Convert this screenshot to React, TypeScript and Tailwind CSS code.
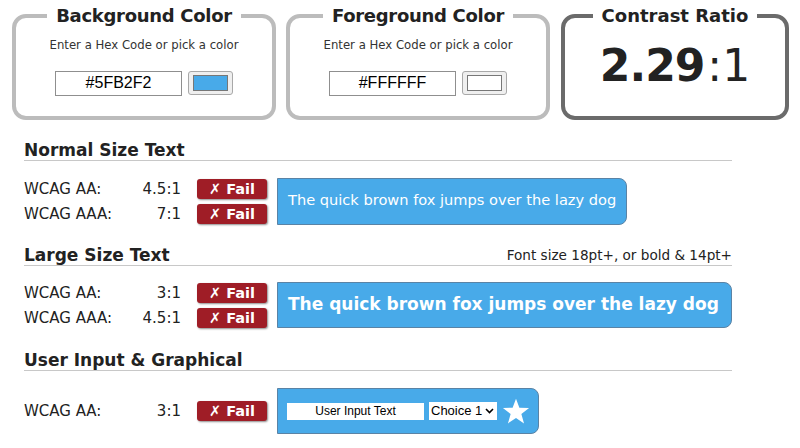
import React from "react";

const BG = "#48aae9";

function ColorBox({ title, hex, swatch }: { title: string; hex: string; swatch: string }) {
  return (
    <fieldset className="rounded-[14px] border-4 border-[#bcbcbc] h-[115px] px-2 text-center">
      <legend className="mx-auto px-[9px] text-[18px] tracking-[-0.3px] font-bold leading-[22px] text-[#222]">{title}</legend>
      <p className="mt-[10px] text-[11.7px] text-[#333]">Enter a Hex Code or pick a color</p>
      <div className="mt-[16px] flex items-center justify-center gap-[6px]">
        <input
          readOnly
          value={hex}
          className="w-[127px] h-[25px] border border-[#8f8f8f] text-center text-[16px] text-black font-['Liberation_Sans',Arial,sans-serif] outline-none"
        />
        <div className="w-[45px] h-[24px] rounded-[3px] border border-[#a8a8a8] bg-[#efefef] flex items-center justify-center">
          <div className="w-[35px] h-[16px] border border-[#777]" style={{ backgroundColor: swatch }} />
        </div>
      </div>
    </fieldset>
  );
}

function FailBadge() {
  return (
    <div className="w-[70px] h-[20px] rounded-[3px] bg-[#9f1d26] text-white font-bold text-[14.5px] leading-[20px] text-center shadow-[1px_1px_2px_rgba(0,0,0,0.45)]">
      ✗ Fail
    </div>
  );
}

function Row({ label, ratio }: { label: string; ratio: string }) {
  return (
    <div className="flex items-center h-[20px]">
      <span className="w-[110px] text-[15px] text-[#222]">{label}</span>
      <span className="w-[47px] text-right text-[15px] text-[#222]">{ratio}</span>
      <div className="ml-[16px]">
        <FailBadge />
      </div>
    </div>
  );
}

function Heading({ children, note }: { children: React.ReactNode; note?: string }) {
  return (
    <div className="flex items-end justify-between border-b border-[#c8c8c8]">
      <h2 className="text-[17px] font-bold text-[#222] leading-[19px]">{children}</h2>
      {note && <span className="text-[13.6px] text-[#222] leading-[19px]">{note}</span>}
    </div>
  );
}

function Star() {
  return (
    <svg width="28" height="27" viewBox="0 0 24 23">
      <polygon
        fill="white"
        points="12,0.5 14.9,8.2 23.2,8.5 16.6,13.6 18.9,21.7 12,17 5.1,21.7 7.4,13.6 0.8,8.5 9.1,8.2"
      />
    </svg>
  );
}

export default function App() {
  return (
    <div className="w-[800px] h-[448px] bg-white overflow-hidden font-['DejaVu_Sans',Verdana,sans-serif]">
      <div className="flex gap-[10px] pl-3 pt-[5px]">
        <div className="w-[264px]">
          <ColorBox title="Background Color" hex="#5FB2F2" swatch={BG} />
        </div>
        <div className="w-[264px]">
          <ColorBox title="Foreground Color" hex="#FFFFFF" swatch="#FFFFFF" />
        </div>
        <div className="w-[228px] ml-[1px]">
          <fieldset className="rounded-[14px] border-4 border-[#6b6b6b] h-[115px] text-center">
            <legend className="mx-auto px-[9px] text-[18px] font-bold leading-[22px] text-[#222]">Contrast Ratio</legend>
            <div className="mt-[11px] text-[#222] leading-[56px]">
              <span className="text-[44px] font-bold tracking-[-1px]">2.29</span>
              <span className="text-[44px] ml-[3px]">:1</span>
            </div>
          </fieldset>
        </div>
      </div>

      <div className="w-[708px] ml-6 mt-[21px]">
        <Heading>Normal Size Text</Heading>
        <div className="flex mt-[17px]">
          <div className="flex flex-col gap-[5px] pt-[1px]">
            <Row label="WCAG AA:" ratio="4.5:1" />
            <Row label="WCAG AAA:" ratio="7:1" />
          </div>
          <div className="ml-[10px] w-[350px] h-[47px] rounded-r-[8px] border border-[#5a83a5] flex items-center pl-[10px] pb-[4px] text-white text-[14.6px]" style={{ backgroundColor: BG }}>
            The quick brown fox jumps over the lazy dog
          </div>
        </div>

        <div className="mt-[21px]">
          <Heading note="Font size 18pt+, or bold & 14pt+">Large Size Text</Heading>
        </div>
        <div className="flex mt-[16px]">
          <div className="flex flex-col gap-[5px] pt-[1px]">
            <Row label="WCAG AA:" ratio="3:1" />
            <Row label="WCAG AAA:" ratio="4.5:1" />
          </div>
          <div className="ml-[10px] flex-1 h-[46px] rounded-r-[8px] border border-[#5a83a5] flex items-center pl-[10px] text-white text-[17px] font-bold whitespace-nowrap" style={{ backgroundColor: BG }}>
            The quick brown fox jumps over the lazy dog
          </div>
        </div>

        <div className="mt-[23px]">
          <Heading>User Input &amp; Graphical</Heading>
        </div>
        <div className="flex items-center mt-[17px]">
          <Row label="WCAG AA:" ratio="3:1" />
          <div className="ml-[10px] w-[262px] h-[46px] rounded-r-[8px] border border-[#5a83a5] flex items-center pl-[9px] gap-[5px]" style={{ backgroundColor: BG }}>
            <div className="w-[137px] h-[17px] bg-white text-center text-[12px] leading-[17px] text-black font-['Liberation_Sans',Arial,sans-serif]">
              User Input Text
            </div>
            <div className="w-[68px] h-[18px] bg-white flex items-center pl-[2px] gap-[3px] text-[13px] text-black font-['Liberation_Sans',Arial,sans-serif]">
              <span>Choice 1</span>
              <svg width="9" height="6" viewBox="0 0 9 6">
                <path d="M1 1 L4.5 4.5 L8 1" stroke="black" strokeWidth="1.6" fill="none" />
              </svg>
            </div>
            <Star />
          </div>
        </div>
      </div>
    </div>
  );
}
